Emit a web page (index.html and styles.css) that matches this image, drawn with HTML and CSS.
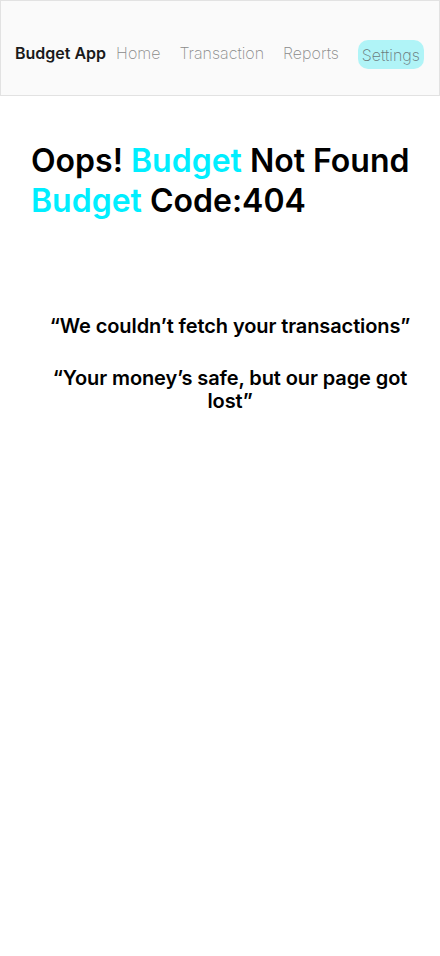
FILE: index.html
```html
<!DOCTYPE html>
<html>
<head>
<meta charset="utf-8">
<link rel="stylesheet" href="styles.css">
</head>
<body>
<header class="topbar">
  <div class="brand">Budget App</div>
  <nav class="nav">
    <a class="nav-item">Home</a>
    <a class="nav-item">Transaction</a>
    <a class="nav-item">Reports</a>
    <a class="nav-item active">Settings</a>
  </nav>
</header>
<main class="content">
  <h1 class="title">Oops! <span class="accent">Budget</span> Not Found<br><span class="accent">Budget</span> Code:404</h1>
  <div class="quotes">
    <p class="quote">“We couldn’t fetch your transactions”</p>
    <p class="quote">“Your money’s safe, but our page got lost”</p>
  </div>
</main>
</body>
</html>
```
FILE: styles.css
```css
* { box-sizing: border-box; }
html, body { margin: 0; padding: 0; background: #fff; }
body { font-family: Inter, "Noto Sans", sans-serif; color: #000; }

.topbar {
  height: 96px;
  background: #fafafa;
  border: 1px solid #e2e2e2;
  display: flex;
  align-items: center;
  padding: 9px 13px 0 14px;
}
.brand {
  font-size: 16px;
  font-weight: 600;
  color: #1a1a1a;
  margin-right: 10px;
  white-space: nowrap;
}
.nav {
  display: flex;
  align-items: center;
  gap: 19px;
}
.nav-item {
  font-family: "Inter ExtraLight", "Inter Light", Inter, sans-serif;
  font-size: 16px;
  font-weight: 200;
  color: #8a8a8a;
  white-space: nowrap;
}
.nav-item.active {
  background: #b0f4f7;
  border-radius: 10px;
  padding: 5px 4px 4px;
  margin-top: 4px;
  color: #6a7a7b;
}

.content { padding: 0 31px; }
.title {
  margin: 45px 0 0;
  font-size: 32px;
  font-weight: 600;
  line-height: 40px;
  white-space: nowrap;
}
.accent { color: #00eeff; }
.quotes {
  margin: 94px -14px 0 6px;
  text-align: center;
}
.quote {
  margin: 0 0 29px;
  font-size: 20px;
  font-weight: 600;
  line-height: 23px;
  letter-spacing: -0.1px;
}
```
